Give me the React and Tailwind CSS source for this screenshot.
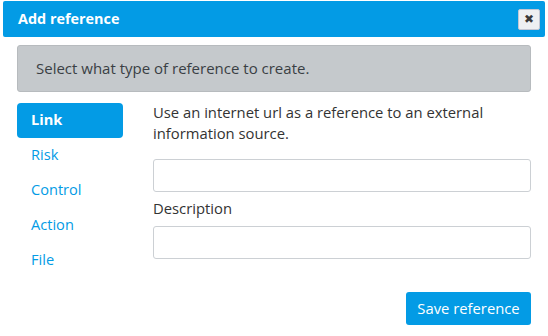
import { useState } from 'react';

const tabs = ['Link', 'Risk', 'Control', 'Action', 'File'];

export default function App() {
  const [active, setActive] = useState('Link');

  return (
    <div className="w-[548px] h-[336px] bg-white pt-px px-[3px] text-[14.8px] text-[#333]" style={{ fontFamily: '"Open Sans", Lato, sans-serif' }}>
      {/* Header */}
      <div className="h-[36px] bg-[#039be5] rounded-[2px] flex items-center justify-between pl-[15px] pr-[5px]">
        <span className="text-white font-bold text-[14.4px]">Add reference</span>
        <button className="w-[22px] h-[21px] bg-[#eef0f2] border border-[#c3c7d4] rounded-[2px] flex items-center justify-center text-[#3a3a3a] text-[12px] leading-none">
          ✖
        </button>
      </div>

      <div className="px-[14px]">
        {/* Info */}
        <div className="mt-[8px] h-[47px] bg-[#c5c9cc] border border-[#b7bbbe] rounded-[3px] flex items-center pl-[18px] text-[#3a3f44] text-[15px]">
          Select what type of reference to create.
        </div>

        <div className="flex mt-[11px]">
          {/* Tabs */}
          <div className="w-[106px] flex flex-col">
            {tabs.map((t) => (
              <button
                key={t}
                onClick={() => setActive(t)}
                className={
                  t === active
                    ? 'h-[35px] text-left pl-[14px] pb-[2px] rounded-[4px] bg-[#039be5] text-white font-bold text-[14.6px]'
                    : 'h-[35px] text-left pl-[14px] pb-[2px] rounded-[4px] text-[#039be5] text-[14.6px]'
                }
              >
                {t}
              </button>
            ))}
          </div>

          {/* Form */}
          <div className="flex-1 ml-[30px]">
            <p className="leading-[21px] -mt-[1px] pr-[20px]">
              Use an internet url as a reference to an external information source.
            </p>
            <input className="mt-[15px] w-full h-[33px] border border-[#ccd0d4] rounded-[3px] px-2 outline-none" />
            <div className="mt-[6px] leading-[20px]">Description</div>
            <input className="mt-[8px] w-full h-[33px] border border-[#ccd0d4] rounded-[3px] px-2 outline-none" />
          </div>
        </div>

        <div className="flex justify-end mt-[14px]">
          <button className="w-[125px] h-[33px] bg-[#039be5] rounded-[3px] text-white text-[14.8px]">
            Save reference
          </button>
        </div>
      </div>
    </div>
  );
}
